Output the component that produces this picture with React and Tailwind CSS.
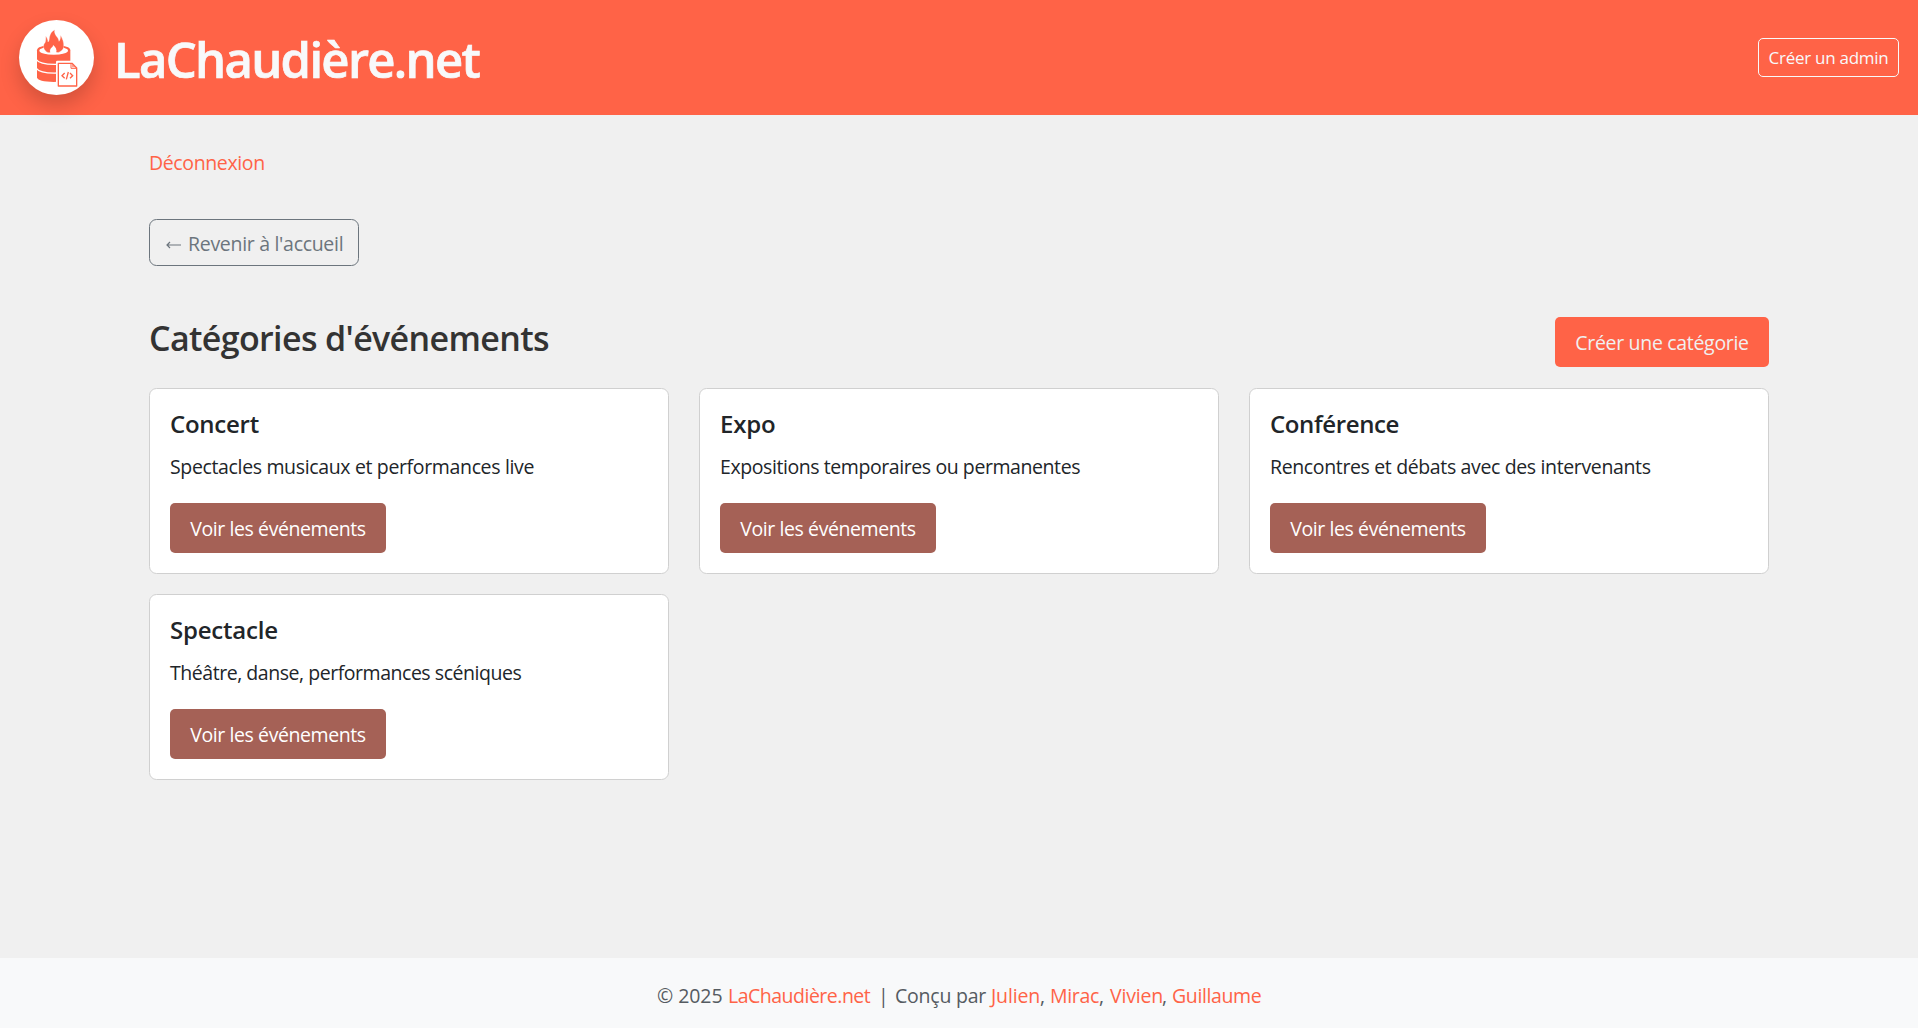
const categories = [
  {
    title: 'Concert',
    titleTracking: 'tracking-[-0.25px]',
    text: 'Spectacles musicaux et performances live',
    textTracking: 'tracking-[-0.35px]',
  },
  {
    title: 'Expo',
    titleTracking: 'tracking-[-0.2px]',
    text: 'Expositions temporaires ou permanentes',
    textTracking: 'tracking-[-0.42px]',
  },
  {
    title: 'Conférence',
    titleTracking: 'tracking-[-0.38px]',
    text: 'Rencontres et débats avec des intervenants',
    textTracking: 'tracking-[-0.36px]',
  },
  {
    title: 'Spectacle',
    titleTracking: 'tracking-[-0.22px]',
    text: 'Théâtre, danse, performances scéniques',
    textTracking: 'tracking-[-0.46px]',
  },
];

function Logo() {
  return (
    <div className="size-[75px] shrink-0 rounded-full bg-white shadow-[0_10px_20px_rgba(0,0,0,0.18)]">
      <svg viewBox="57 60 225 225" className="size-full" fill="none">
        {/* barrel */}
        <path d="M111 151C111 142 126 136 161 136S211 142 211 151V232C211 240 190 246 161 246S111 241 111 232Z" fill="#ff6347" />
        <ellipse cx="161" cy="152" rx="43" ry="12.5" fill="#fff" />
        <path d="M109 179C116 189 138 194 172 193" stroke="#fff" strokeWidth="4" />
        <path d="M109 205C116 215 138 220 172 219" stroke="#fff" strokeWidth="4" />
        {/* flame */}
        <path
          d="M139 155C128 146 129 134 135 128C137 125 138 114 137 108C142 113 144 121 144 126C149 122 147 114 149 109C151 99 157 93 164 89C162 99 167 106 172 112C176 117 176 120 177 124C181 120 182 112 181 106C187 114 193 128 191 141C190 148 186 152 180 155C173 159 170 157 168 157C170 148 166 143 160 136C159 142 153 143 151 149C150 152 151 154 152 157C148 159 143 158 139 155Z"
          fill="#ff6347"
          stroke="#fff"
          strokeWidth="1"
        />
        <path d="M152 158C148 148 159 144 160 136C167 143 171 149 168 158Z" fill="#fff" />
        {/* code file */}
        <path d="M168 186Q168 182 172 182H218L235 199V263H168Z" fill="#fff" />
        <path d="M175 190H216L230 204V258H175Z" stroke="#ff6347" strokeWidth="4" strokeLinejoin="round" />
        <path d="M213 190V205H230" stroke="#ff6347" strokeWidth="3" strokeLinejoin="round" />
        <path d="M216 192V202H226Z" fill="#ff6347" fillOpacity="0.6" />
        <path
          d="M194 219L186 227L194 235M210 219L218 227L210 235M205 216L199 238"
          stroke="#ff6347"
          strokeWidth="4"
        />
      </svg>
    </div>
  );
}

function CategoryCard({ title, titleTracking, text, textTracking }) {
  return (
    <article className="h-[186px] rounded-[7.5px] border border-[#d0d0d0] bg-white p-5 text-[#212529]">
      <h3 className={'mb-2.5 text-[24px]/[30px] font-semibold whitespace-nowrap ' + titleTracking}>{title}</h3>
      <p className={'mb-[19px] pt-px whitespace-nowrap ' + textTracking}>{text}</p>
      <a
        href="#"
        className="flex h-[50px] w-[216px] items-center justify-center rounded-[5px] bg-[#a56156] pt-0.5 tracking-[-0.41px] whitespace-nowrap text-white"
      >
        Voir les événements
      </a>
    </article>
  );
}

export default function App() {
  return (
    <div className="flex h-[1028px] flex-col bg-[#f0f0f0] font-['Open_Sans','Noto_Sans',sans-serif] text-[19.5px]/[34px] text-[#333]">
      <header className="relative flex h-[115px] shrink-0 items-center justify-between bg-[#ff6347] px-[19px]">
        <div className="flex items-center gap-5">
          <Logo />
          <h1 className="mt-0.5 text-[49px]/[60px] font-semibold tracking-[-1.7px] text-[#f8f9fa] [-webkit-text-stroke:0.7px_#f8f9fa]">
            LaChaudière.net
          </h1>
        </div>
        <a
          href="#"
          className="flex h-[39px] w-[141px] items-center justify-center rounded-[5px] border border-[#f8f9fa] text-[17px] tracking-[-0.27px] whitespace-nowrap text-[#f8f9fa]"
        >
          Créer un admin
        </a>
      </header>

      <main className="mx-auto w-[1620px] grow pt-[31px]">
        <nav className="flex">
          <a href="#" className="tracking-[-0.37px] text-[#ff6347]">
            Déconnexion
          </a>
        </nav>
        <a
          href="#"
          className="mt-[39px] flex h-[47px] w-[210px] items-center gap-1.5 rounded-[7.5px] border border-[#6c757d] pl-4 whitespace-nowrap text-[#6c757d]"
        >
          <svg viewBox="0 0 16 10" className="mt-1 h-2.5 w-4" fill="none" stroke="currentColor" strokeWidth="1.2">
            <path d="M15 5H1.5M4 2L1 5L4 8" />
          </svg>
          <span className="pt-0.5 tracking-[-0.3px]">Revenir à l'accueil</span>
        </a>

        <div className="mt-[51px] flex h-[50px] justify-between">
          <h2 className="text-[34px]/[42px] font-semibold tracking-[-0.64px]">Catégories d'événements</h2>
          <a
            href="#"
            className="flex h-[50px] w-[214px] items-center justify-center rounded-[5px] bg-[#ff6347] pt-0.5 tracking-[-0.31px] whitespace-nowrap text-[#f0f0f0]"
          >
            Créer une catégorie
          </a>
        </div>

        <div className="mt-[21px] grid grid-cols-3 gap-x-[30px] gap-y-5">
          {categories.map((category) => (
            <CategoryCard key={category.title} {...category} />
          ))}
        </div>
      </main>

      <footer className="flex h-[70px] shrink-0 bg-[#f8f9fa] pt-[21px] pl-[657px] whitespace-nowrap text-[#555b61]">
        <span className="w-[71px] tracking-[-0.07px]">© 2025</span>
        <a href="#" className="w-[150px] tracking-[-0.5px] text-[#ff6347]">LaChaudière.net</a>
        <span className="w-[17px]">|</span>
        <span className="w-[96px] tracking-[-0.23px]">Conçu par</span>
        <a href="#" className="w-[49px] tracking-[-0.14px] text-[#ff6347]">Julien</a>
        <span className="w-[10px]">,</span>
        <a href="#" className="w-[49px] tracking-[-0.3px] text-[#ff6347]">Mirac</a>
        <span className="w-[11px]">,</span>
        <a href="#" className="w-[52px] tracking-[-0.2px] text-[#ff6347]">Vivien</a>
        <span className="w-[10px]">,</span>
        <a href="#" className="tracking-[-0.37px] text-[#ff6347]">Guillaume</a>
      </footer>
    </div>
  );
}
